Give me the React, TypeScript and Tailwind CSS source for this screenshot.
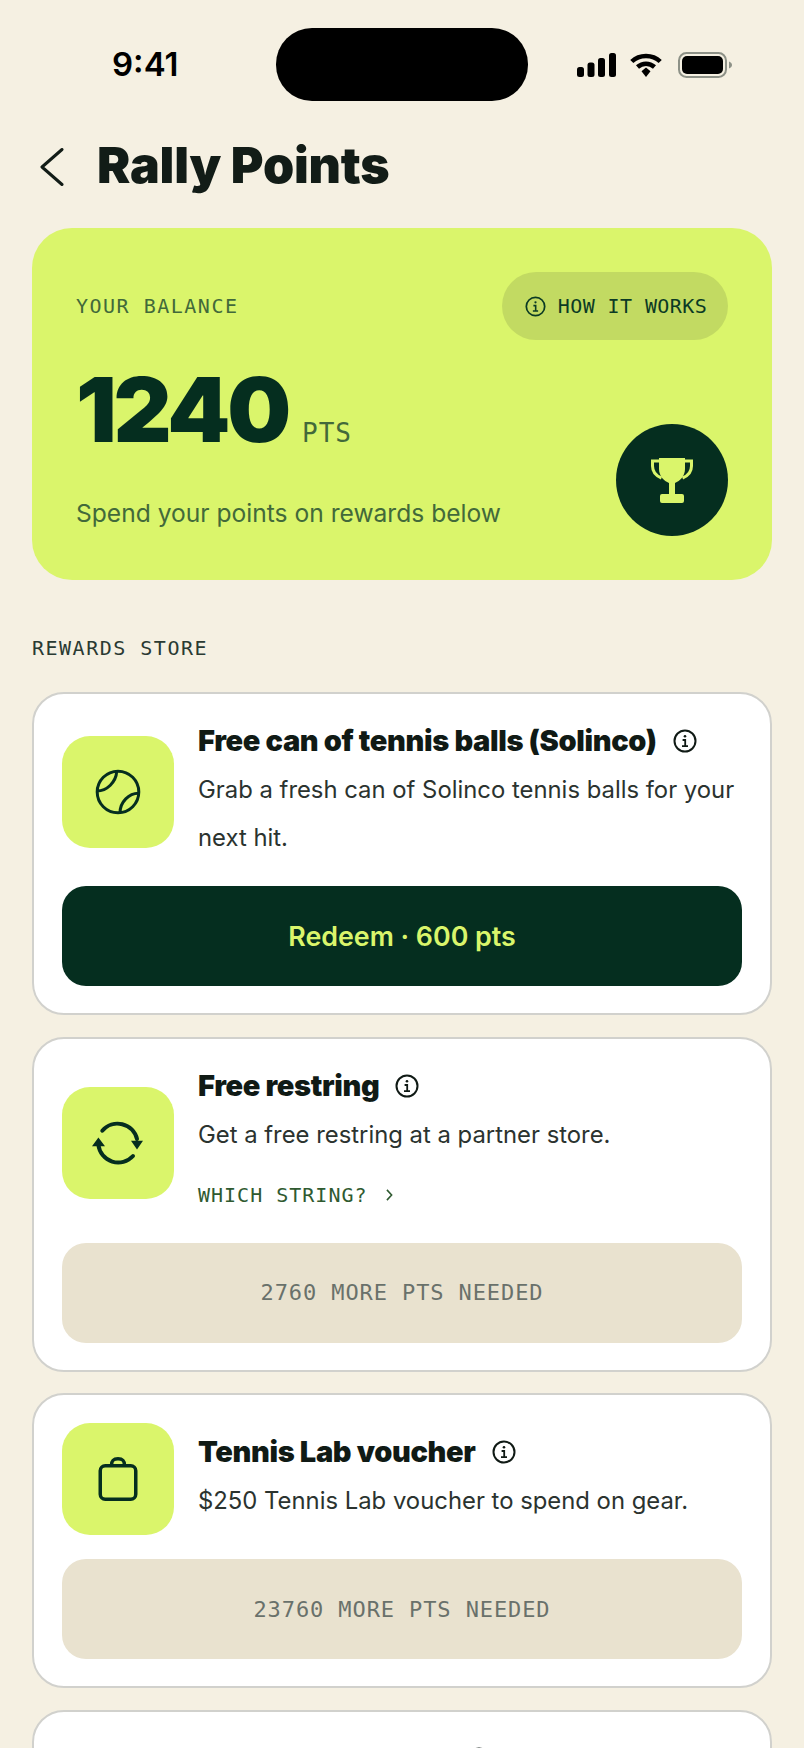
import React from 'react';

const Info = ({ className }: { className: string }) => (
  <svg viewBox="0 0 24 24" fill="none" stroke="currentColor" strokeWidth="2" className={className}>
    <circle cx="12" cy="12" r="10.5" />
    <circle cx="12" cy="7.2" r="1.3" fill="currentColor" stroke="none" />
    <path d="M9.6 11h2.6v6.2M9 17.2h6" strokeWidth="1.8" />
  </svg>
);

const BallIcon = () => (
  <svg viewBox="0 0 48 48" fill="none" stroke="#052e1f" strokeWidth="3" className="w-[48px] h-[48px]">
    <circle cx="24" cy="24" r="20.8" />
    <path d="M22.7 3.7C22 14 13 23 2.9 23" />
    <path d="M45 25.3C35 25 26 34 26 45" />
  </svg>
);

const SyncIcon = () => (
  <svg viewBox="0 0 56 56" fill="none" stroke="#052e1f" strokeWidth="4" strokeLinecap="round" className="w-[56px] h-[56px]">
    <path d="M12.3 15.7A20 20 0 0 1 47 24" />
    <path d="M8.4 30A20 20 0 0 0 43 41" />
    <path d="M41 25.7h12l-6 8.8zM2 31.2h13L8.4 22.4z" fill="#052e1f" strokeWidth="0" />
  </svg>
);

const BagIcon = () => (
  <svg viewBox="0 0 48 48" fill="none" stroke="#052e1f" strokeWidth="3.5" className="w-[48px] h-[48px]">
    <rect x="6.25" y="10.75" width="35.5" height="33.5" rx="5" />
    <path d="M17.5 10.5C17.5 5 20 3.7 24 3.7S30.5 5 30.5 10.5" />
  </svg>
);

const Trophy = () => (
  <svg viewBox="0 0 48 48" fill="none" className="w-[48px] h-[48px]">
    <path
      d="M11 2h26v11c0 7-5 12-10 14v11h7a2 2 0 0 1 2 2v5a2 2 0 0 1-2 2H14a2 2 0 0 1-2-2v-5a2 2 0 0 1 2-2h7V27C16 25 11 20 11 13z"
      fill="#daf56b"
    />
    <path d="M11 5H4.5v5c0 6 4 10 9 12M37 5h6.5v5c0 6-4 10-9 12" stroke="#daf56b" strokeWidth="3" />
  </svg>
);

const StatusIcons = () => (
  <div className="flex items-center pl-[49px]">
    <svg viewBox="0 0 39 24" className="w-[39px] h-[24px]" fill="#000">
      <rect x="0" y="14" width="7" height="10" rx="2.5" />
      <rect x="10.5" y="9.5" width="7" height="14.5" rx="2.5" />
      <rect x="21" y="5" width="7" height="19" rx="2.5" />
      <rect x="32" y="0" width="7" height="24" rx="2.5" />
    </svg>
    <svg viewBox="0 0 32 24" className="w-[32px] h-[24px] ml-[14px]" fill="none" stroke="#000" strokeWidth="4.5">
      <path d="M1.8 8.5C9.5 1 22.5 1 30.2 8.5" />
      <path d="M7.5 14C12.5 9.5 19.5 9.5 24.500 14" />
      <path d="M11.5 18.2L16 14.6l4.5 3.6L16 24z" fill="#000" stroke="none" />
    </svg>
    <svg viewBox="0 0 54 26" className="w-[54px] h-[26px] ml-[16px]" fill="none">
      <rect x="1" y="1" width="47" height="24" rx="7.5" stroke="#8d9187" strokeWidth="2" />
      <rect x="4" y="4" width="41" height="18" rx="5" fill="#000" />
      <path d="M51 9.5c2 .8 3 2 3 3.500s-1 2.700-3 3.500z" fill="#8d9187" />
    </svg>
  </div>
);

const mono = "font-['DejaVu_Sans_Mono',monospace]";

const RewardTitle = ({ title }: { title: string }) => (
  <div className="flex items-center gap-[16px] h-[38px]">
    <h3 className="text-[29px] leading-[38px] font-black tracking-[-0.012em] text-[#101a15]">{title}</h3>
    <Info className="w-[24px] h-[24px] text-[#101a15] shrink-0" />
  </div>
);

const RewardCard = ({ icon, title, desc, link, action, dark }: {
  icon: React.ReactNode;
  title: string;
  desc: string;
  link?: string;
  action: string;
  dark?: boolean;
}) => (
  <div className="bg-white border-2 border-[#d1d1cd] rounded-[32px] px-[28px] pt-[28px] pb-[27px] flex flex-col gap-[24px]">
    <div className="flex items-center gap-[24px]">
      <div className="w-[112px] h-[112px] shrink-0 rounded-[28px] bg-[#daf56b] flex items-center justify-center">
        {icon}
      </div>
      <div className="flex-1 min-w-0">
        <RewardTitle title={title} />
        <p className="mt-[6px] text-[23.85px] leading-[48px] text-[#2b332f]">{desc}</p>
        {link && (
          <div className={`mt-[12px] h-[48px] flex items-center gap-[18px] text-[20px] tracking-[1px] text-[#2f5a30] ${mono}`}>
            {link}
            <svg viewBox="0 0 8 14" fill="none" stroke="currentColor" strokeWidth="1.8" className="w-[7px] h-[12px]">
              <path d="M1 1l5.500 6L1 13" />
            </svg>
          </div>
        )}
      </div>
    </div>
    {dark ? (
      <div className="h-[100px] rounded-[24px] bg-[#052e1f] flex items-center justify-center text-[26.8px] font-semibold text-[#daf56b]">
        {action}
      </div>
    ) : (
      <div className={`h-[100px] rounded-[24px] bg-[#e9e2cf] flex items-center justify-center text-[22px] tracking-[0.9px] text-[#69716b] ${mono}`}>
        {action}
      </div>
    )}
  </div>
);

export default function App() {
  return (
    <div className="w-[804px] h-[1748px] overflow-hidden bg-[#f5f0e2] font-['Inter',sans-serif]">
      <div className="flex items-center pt-[28px] h-[101px]">
        <div className="w-[276px] pl-[112px] text-[33px] leading-none font-semibold text-black">9:41</div>
        <div className="w-[252px] h-[73px] rounded-[36px] bg-black" />
        <StatusIcons />
      </div>

      <div className="flex items-center h-[127px] pl-[40px] gap-[33px]">
        <svg viewBox="0 0 24 38" fill="none" stroke="#121c17" strokeWidth="3" strokeLinecap="round" strokeLinejoin="round" className="w-[24px] h-[38px] mt-[4px]">
          <path d="M22 1.500L2 19l20 17.500" />
        </svg>
        <h1 className="text-[50px] leading-none font-black tracking-[-0.2px] text-[#121c17]">Rally Points</h1>
      </div>

      <div className="mx-[32px] h-[352px] rounded-[40px] bg-[#daf56b] pl-[44px] pr-[44px] pt-[44px] flex flex-col">
        <div className="flex items-center justify-between">
          <span className={`text-[20px] tracking-[1.500px] text-[#42693a] ${mono}`}>YOUR BALANCE</span>
          <div className={`w-[226px] h-[68px] rounded-full bg-[#c2da62] flex items-center justify-center gap-[12px] pl-[2px] text-[20px] tracking-[0.4px] text-[#0b3a24] ${mono}`}>
            <Info className="w-[21px] h-[21px]" />
            HOW IT WORKS
          </div>
        </div>
        <div className="flex justify-between flex-1">
          <div>
            <div className="flex items-baseline gap-[14px] mt-[22px]">
              <span className="text-[90px] leading-[96px] font-black tracking-[-0.035em] text-[#052e1f]">1240</span>
              <span className={`text-[26px] tracking-[1px] text-[#42693a] ${mono}`}>PTS</span>
            </div>
            <p className="mt-[37px] text-[24.6px] leading-[36px] text-[#42693a]">Spend your points on rewards below</p>
          </div>
          <div className="w-[112px] h-[112px] mt-[84px] rounded-full bg-[#052e1f] flex items-center justify-center">
            <Trophy />
          </div>
        </div>
      </div>

      <div className={`mx-[32px] mt-[50px] mb-[26px] text-[20px] leading-[36px] tracking-[1.500px] text-[#2a3a32] ${mono}`}>REWARDS STORE</div>

      <div className="mx-[32px] flex flex-col gap-[21.5px]">
        <RewardCard
          icon={<BallIcon />}
          title="Free can of tennis balls (Solinco)"
          desc="Grab a fresh can of Solinco tennis balls for your next hit."
          action="Redeem · 600 pts"
          dark
        />
        <RewardCard
          icon={<SyncIcon />}
          title="Free restring"
          desc="Get a free restring at a partner store."
          link="WHICH STRING?"
          action="2760 MORE PTS NEEDED"
        />
        <RewardCard
          icon={<BagIcon />}
          title="Tennis Lab voucher"
          desc="$250 Tennis Lab voucher to spend on gear."
          action="23760 MORE PTS NEEDED"
        />
        {/* only the top of this card is on screen */}
        <div className="bg-white border-2 border-[#d1d1cd] rounded-[32px] pl-[164px] pt-[28px] pb-[60px]">
          <RewardTitle title="Rally access pass" />
        </div>
      </div>
    </div>
  );
}
